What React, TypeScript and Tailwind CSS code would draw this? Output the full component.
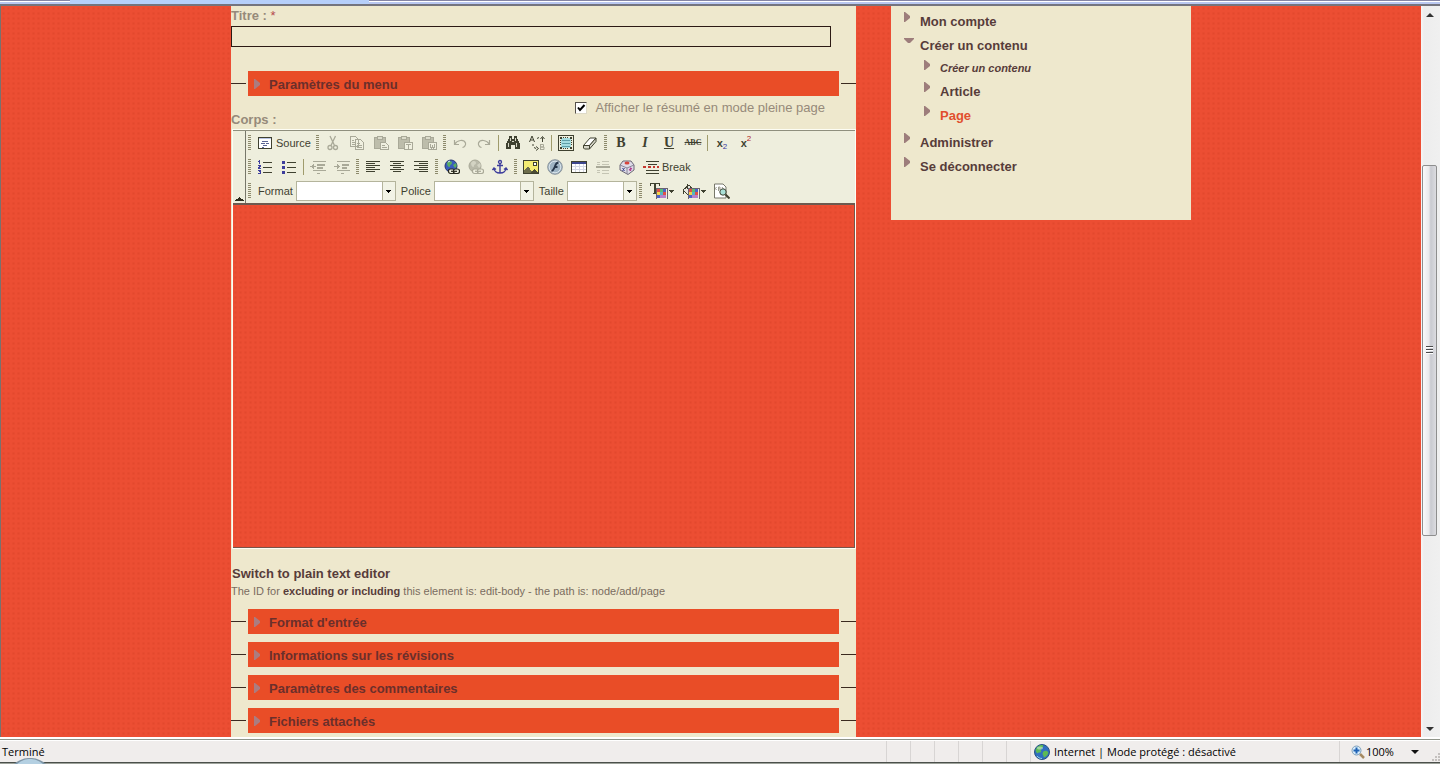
import type { ReactNode } from 'react';

const DOTS =
  'bg-[#ec4e33] bg-[radial-gradient(circle_at_center,#e3482d_0,#e74b30_1px,transparent_2px)] bg-[size:5px_5px]';

const INK = '#3f4130';
const OFF = '#a9a998';

function Svg({ children, w = 16, crisp = true }: { children: ReactNode; w?: number; crisp?: boolean }) {
  return (
    <svg
      width={w}
      height={16}
      viewBox={`0 0 ${w} 16`}
      fill="none"
      shapeRendering={crisp ? 'crispEdges' : 'auto'}
      aria-hidden="true"
      className="shrink-0"
    >
      {children}
    </svg>
  );
}

function Tool({ label, children }: { label: string; children: ReactNode }) {
  return (
    <button type="button" aria-label={label} className="flex h-6 w-6 shrink-0 items-center justify-center">
      {children}
    </button>
  );
}

function Handle() {
  return (
    <span className="flex h-6 w-[7px] shrink-0 items-center pl-0.5">
      <span className="h-4 w-[3px] bg-[repeating-linear-gradient(to_bottom,#8d8a6c_0,#8d8a6c_1px,transparent_1px,transparent_2px)]" />
    </span>
  );
}

function Separator() {
  return (
    <span className="flex h-6 w-[5px] shrink-0 items-center justify-center">
      <span className="h-4 w-px bg-[#9f9b6c]" />
    </span>
  );
}

function Combo({ id, label, width }: { id: string; label: string; width: string }) {
  return (
    <>
      <label htmlFor={id} className="pr-[3px] pl-[5px]">
        {label}
      </label>
      <span className={`relative flex h-5 shrink-0 ${width}`}>
        <select id={id} className="w-full appearance-none border border-[#b4b49c] bg-white px-1 outline-none" />
        <span className="pointer-events-none absolute inset-y-px right-px flex w-[13px] items-center justify-center border-l border-[#b4b49c] bg-[#f2f3e6]">
          <svg width="5" height="3" viewBox="0 0 5 3" shapeRendering="crispEdges" aria-hidden="true">
            <path d="M0 0h5v1H4v1H3v1H2V2H1V1H0z" fill="#000" />
          </svg>
        </span>
      </span>
    </>
  );
}

function Clipboard({ children }: { children: ReactNode }) {
  return (
    <Svg>
      <path d="M1.500 2.500h11v11h-11z" fill="#bdbdab" stroke={OFF} />
      <path d="M4.500 1.500h5v3h-5z" fill="#dcdccb" stroke={OFF} />
      <path d="M7 7h9v8H7z" fill="#f0f0e0" />
      {children}
    </Svg>
  );
}

function Swatches({ x }: { x: number }) {
  return (
    <>
      <path d={`M${x} 6h9v9h-9z`} fill="#77727c" />
      <path d={`M${x} 6h3v3h-3zM${x + 6} 9h3v3h-3z`} fill="#e05048" />
      <path d={`M${x + 3} 6h3v3h-3z`} fill="#5bbd74" />
      <path d={`M${x + 6} 6h3v3h-3zM${x} 12h3v3h-3z`} fill="#4e62c4" />
      <path d={`M${x} 9h3v3h-3z`} fill="#f3d34c" />
      <path d={`M${x + 3} 9h3v3h-3z`} fill="#55b5c5" />
      <path d={`M${x + 3} 12h6v3h-6z`} fill="#b77fc8" />
      <path d={`M${x - 1} 5h11v11h-11z`} transform="translate(.5 .5)" stroke="#6a6470" strokeWidth="1" />
      <path d={`M${x + 12} 7h5v1h-1v1h-1v1h-1v-1h-1v-1h-1z`} fill={INK} />
    </>
  );
}

function Chain({ color }: { color: string }) {
  return (
    <g fill="#f0f0e0" stroke={color} strokeWidth="1.200">
      <rect x="4.500" y="10" width="6" height="4.500" rx="2" />
      <rect x="9.500" y="10" width="6" height="4.500" rx="2" />
      <path d="M7 12.300h6" />
    </g>
  );
}

function FirstRow() {
  return (
    <div className="flex h-6 items-center">
      <Handle />
      <button type="button" className="flex h-6 w-[61px] shrink-0 items-center gap-[3px] pl-1">
        <Svg>
          <path d="M1.500 2.500h13v11h-13z" fill="#fff" stroke={INK} />
          <path d="M2 3h12v1H2z" fill="#b9c4e4" />
          <path d="M5 6h6M4 8h4M9 8h3M6 10h4M5 12h2" stroke="#5b6494" transform="translate(0 .5)" />
        </Svg>
        Source
      </button>
      <Handle />
      <Tool label="Couper">
        <Svg crisp={false}>
          <path d="M5 1l4.500 9.500M10.500 1L6 10.500" stroke={OFF} strokeWidth="1.300" />
          <circle cx="5" cy="12.500" r="2" stroke={OFF} strokeWidth="1.300" />
          <circle cx="10.500" cy="12.500" r="2" stroke={OFF} strokeWidth="1.300" />
        </Svg>
      </Tool>
      <Tool label="Copier">
        <Svg>
          <path d="M1.500 1.500h5l3 3v7h-8zM6.500 4.500h5l3 3v7h-8z" fill="#f0f0e0" stroke={OFF} />
          <path d="M3 5.500h2M3 7.500h3M3 9.500h3M8 8.500h3M8 10.500h5M8 12.500h5" stroke={OFF} />
        </Svg>
      </Tool>
      <Tool label="Coller">
        <Clipboard>
          <path d="M7.500 7.500h5l3 3v4h-8zM9 10.500h3M9 12.500h5" stroke={OFF} />
        </Clipboard>
      </Tool>
      <Tool label="Coller comme texte">
        <Clipboard>
          <path d="M7.500 7.500h8v7h-8z" stroke={OFF} />
          <path d="M9 9h5v1h-2v4h-1v-4H9z" fill={OFF} />
        </Clipboard>
      </Tool>
      <Tool label="Coller de Word">
        <Clipboard>
          <path d="M7.500 7.500h8v7h-8z" stroke={OFF} />
          <path d="M9.500 9v3l1 1.500 1-2 1 2 1-1.500V9" stroke={OFF} />
        </Clipboard>
      </Tool>
      <Handle />
      <Tool label="Annuler">
        <Svg crisp={false}>
          <path d="M2.500 5v4.500H7M3 9c2-4 9-5 10.500-1 .5 2-1 4-3 4.500" stroke={OFF} strokeWidth="1.200" />
        </Svg>
      </Tool>
      <Tool label="Refaire">
        <Svg crisp={false}>
          <path d="M13.500 5v4.500H9M13 9C11 5 4 4 2.500 8c-.5 2 1 4 3 4.500" stroke={OFF} strokeWidth="1.200" />
        </Svg>
      </Tool>
      <Separator />
      <Tool label="Chercher">
        <Svg>
          <path d="M4 1h3v3h2V1h3v3h1v2h1v2h1v6h-5v-4H6v4H1V8h1V6h1V4h1z" fill={INK} />
          <path d="M3 8h1v4H3zM11 8h1v4h-1zM5 3h1v3H5zM10 3h1v3h-1zM7 6h2v1H7z" fill="#d8d8c8" />
        </Svg>
      </Tool>
      <Tool label="Remplacer">
        <Svg crisp={false}>
          <path d="M.5 7L3 1l2.500 6M1.500 5h3" stroke={INK} />
          <path d="M11.500 9v6M11.500 9.500h3v2.500h-3M12 12h3v2.500h-3.500" stroke={OFF} />
          <path d="M8 3.500l2-1M13.500 7V2.500M11.500 4l2-2.500 2 2.500M4 9v2M5 12.500l2 1M7 11.500l2.500 2L7 15.500" stroke={INK} />
        </Svg>
      </Tool>
      <Separator />
      <Tool label="Tout sélectionner">
        <Svg>
          <path d="M.5.5h15v15H.5z" stroke={INK} />
          <path d="M2 2h2v2H2zM12 2h2v2h-2zM2 12h2v2H2zM12 12h2v2h-2z" fill={INK} />
          <path d="M4 3h8v1h1v8h-1v1H4v-1H3V4h1z" fill="#a5dde1" />
          <path d="M4 5.500h8M4 8.500h8M4 11.500h8" stroke="#5f9fa8" />
          <path d="M5 2.500h1M7 2.500h1M9 2.500h1M5 13.500h1M7 13.500h1M9 13.500h1M2.500 5v1M2.500 7v1M2.500 9v1M13.500 5v1M13.500 7v1M13.500 9v1" stroke={INK} />
        </Svg>
      </Tool>
      <Tool label="Supprimer le format">
        <Svg crisp={false}>
          <path d="M1.500 10.500L8 3h6l-6.500 7.500z" fill="#fff" stroke={INK} />
          <path d="M1.500 10.500h6V14h-5l-1-1zM7.500 10.500L14 3v3.500L7.500 14z" fill="#d5d5c8" stroke={INK} />
        </Svg>
      </Tool>
      <Handle />
      <Tool label="Gras">
        <span className="font-['Liberation_Serif',serif] text-[14px] leading-4 font-bold">B</span>
      </Tool>
      <Tool label="Italique">
        <span className="font-['Liberation_Serif',serif] text-[14px] leading-4 font-bold italic">I</span>
      </Tool>
      <Tool label="Souligné">
        <span className="font-['Liberation_Serif',serif] text-[14px] leading-4 font-bold underline">U</span>
      </Tool>
      <Tool label="Barré">
        <span className="font-['Liberation_Serif',serif] text-[8px] leading-4 font-bold line-through">ABC</span>
      </Tool>
      <Separator />
      <Tool label="Indice">
        <span className="flex items-center text-[11px] leading-4 font-bold">
          x<span className="pt-2 text-[8px] leading-2 font-normal text-[#3b3ba0]">2</span>
        </span>
      </Tool>
      <Tool label="Exposant">
        <span className="flex items-center text-[11px] leading-4 font-bold">
          x<span className="pb-2 text-[8px] leading-2 font-normal text-[#b02525]">2</span>
        </span>
      </Tool>
    </div>
  );
}

function Align({ short }: { short: string }) {
  return (
    <Svg>
      <path d="M1 2.500h14M1 6.500h14M1 10.500h14" stroke={INK} />
      <path d={short} stroke={INK} />
    </Svg>
  );
}

function SecondRow() {
  return (
    <div className="flex h-6 items-center">
      <Handle />
      <Tool label="Liste numérotée">
        <Svg>
          <path d="M6 3.500h9M6 8.500h9M6 13.500h9" stroke={INK} />
          <path d="M2.500 1v4M1 2.500h1M1 6.500h2v1H2v1H1v1h3M1 11.500h2v1H2M3 12.500v2M1 14.500h2" stroke="#3d3d9c" />
        </Svg>
      </Tool>
      <Tool label="Liste à puces">
        <Svg>
          <path d="M6 3.500h9M6 8.500h9M6 13.500h9" stroke={INK} />
          <path d="M1 2h3v3H1zM1 7h3v3H1zM1 12h3v3H1z" fill="#3d3d9c" />
        </Svg>
      </Tool>
      <Separator />
      <Tool label="Diminuer le retrait">
        <Svg>
          <path d="M3 2.500h13M7 5.500h8M7 8.500h6M3 11.500h13M7 14.500h3M0 7.500h6" stroke={OFF} />
          <path d="M3 5h1v5H3V9H2V6h1zM7 5h8v2H7zM7 8h6v2H7z" fill={OFF} />
        </Svg>
      </Tool>
      <Tool label="Augmenter le retrait">
        <Svg>
          <path d="M3 2.500h13M3 11.500h13M7 14.500h3M0 7.500h6" stroke={OFF} />
          <path d="M3 5h1v1h1v3H4v1H3zM8 5h7v2H8zM8 8h5v2H8z" fill={OFF} />
        </Svg>
      </Tool>
      <Handle />
      <Tool label="Aligner à gauche">
        <Align short="M1 4.500h9M1 8.500h9M1 12.500h9" />
      </Tool>
      <Tool label="Centrer">
        <Align short="M4 4.500h8M4 8.500h8M4 12.500h8" />
      </Tool>
      <Tool label="Aligner à droite">
        <Align short="M6 4.500h9M6 8.500h9M6 12.500h9" />
      </Tool>
      <Handle />
      <Tool label="Lien">
        <Svg crisp={false}>
          <circle cx="7" cy="7" r="6" fill="#3a5cbd" stroke="#25356f" />
          <path d="M3 4c2-3 5-2 5 0s-2 1-2 3-3 1-3-3zM9 6l3-2c1 2 1 4-1 5z" fill="#5aae62" />
          <path d="M4 3l2-1" stroke="#d5e6ff" />
          <Chain color="#26261c" />
        </Svg>
      </Tool>
      <Tool label="Supprimer le lien">
        <Svg crisp={false}>
          <circle cx="7" cy="7" r="6" fill="#b9b9a9" stroke={OFF} />
          <path d="M3 4c2-3 5-2 5 0s-2 1-2 3-3 1-3-3zM9 6l3-2c1 2 1 4-1 5z" fill="#d3d3c3" />
          <Chain color={OFF} />
        </Svg>
      </Tool>
      <Tool label="Ancre">
        <Svg crisp={false}>
          <circle cx="8" cy="3" r="1.500" stroke="#3d3d9c" strokeWidth="1.300" />
          <path
            d="M8 4.500V14M5 6.500h6M2 9c0 3 2.500 5 6 5s6-2 6-5M.5 11L2 9l2 1.500M15.500 11L14 9l-2 1.500"
            stroke="#3d3d9c"
            strokeWidth="1.400"
          />
        </Svg>
      </Tool>
      <Handle />
      <Tool label="Image">
        <Svg>
          <path d="M.5 1.500h15v13H.5z" fill="#f4ec72" stroke={INK} />
          <path d="M10 3h4v4h-4z" fill={INK} />
          <path d="M11 4h2v2h-2z" fill="#fff" />
          <path d="M1 12l4-5 5 7H1z" fill="#6d6d4c" />
          <path d="M8 14l3-4 4 4z" fill="#4c4c36" />
        </Svg>
      </Tool>
      <Tool label="Animation Flash">
        <Svg crisp={false}>
          <circle cx="8" cy="8" r="7.300" fill="#9fb4c4" stroke="#8c959c" />
          <circle cx="8" cy="8" r="5.800" stroke="#dbe5ea" />
          <path d="M11.500 3.500c-3 0-3 3-4 5s-1.500 3.500-3 3.500M7 8h3.500" stroke="#26364a" strokeWidth="1.800" />
        </Svg>
      </Tool>
      <Tool label="Tableau">
        <Svg>
          <path d="M.5 2.500h15v11H.5z" fill="#fff" stroke={INK} />
          <path d="M4.500 5v8M8.500 5v8M12.500 5v8M1 7.500h14M1 10.500h14" stroke="#d5d8e4" />
          <path d="M1 3h14v2H1z" fill="#3d478e" />
        </Svg>
      </Tool>
      <Tool label="Ligne horizontale">
        <Svg>
          <path d="M1 8h14" stroke={OFF} strokeWidth="2" />
          <path d="M2 3.500h3M2 5.500h3M7 2.500h7M7 5.500h7M2 11.500h3M2 13.500h3M7 11.500h7M7 14.500h7" stroke="#c5c5b4" />
        </Svg>
      </Tool>
      <Tool label="Caractère spécial">
        <Svg crisp={false}>
          <path d="M1 6l3-4h8l3 4v5l-6 4.500L1 11z" fill="#dedbe8" stroke="#6a6674" />
          <path d="M1 6l7 3 7-3M8 9v6" stroke="#8a8698" />
          <ellipse cx="8" cy="4" rx="2.500" ry="1.500" fill="#d7443c" />
          <path d="M3.500 9l2 3M5.500 9l-2 3" stroke="#3d478e" />
          <path d="M10 11l3-1.500M11.500 8.500v3.500" stroke="#b13a8c" strokeWidth="1.300" />
        </Svg>
      </Tool>
      <button type="button" className="flex h-6 shrink-0 items-center gap-[3px] pl-1">
        <Svg>
          <path d="M3 2.500h13M5 5.500h9M3 11.500h13M3 14.500h13" stroke={INK} />
          <path d="M0 8h3M5 8h3M10 8h2M14 8h2" stroke="#c4392f" strokeWidth="2" />
        </Svg>
        Break
      </button>
    </div>
  );
}

function ThirdRow() {
  return (
    <div className="flex h-6 items-center">
      <Handle />
      <Combo id="format" label="Format" width="w-[100px]" />
      <Combo id="police" label="Police" width="w-[100px]" />
      <Combo id="taille" label="Taille" width="w-[70px]" />
      <Handle />
      <button type="button" aria-label="Couleur de texte" className="ml-1.5 flex h-6 w-8 shrink-0 items-center">
        <Svg w={26}>
          <path d="M0 0h10v3H9V1H6v9h1v1H3v-1h1V1H1v2H0z" fill={INK} />
          <Swatches x={7} />
        </Svg>
      </button>
      <button type="button" aria-label="Couleur de fond" className="flex h-6 w-8 shrink-0 items-center">
        <Svg w={26}>
          <path d="M1 7l6-5 5 6-5 5z" fill="#e6e6dc" stroke={INK} />
          <path d="M5 1v5M1 7v4" stroke={INK} />
          <Swatches x={7} />
        </Svg>
      </button>
      <button type="button" aria-label="Prévisualisation" className="flex h-6 w-5 shrink-0 items-center">
        <Svg crisp={false}>
          <path d="M.5 1h8.500l3 3v11H.5z" fill="#fff" stroke="#77776a" />
          <path d="M2.500 4l-1 1.500 1 1.500M4.500 8V4h1.500v2H5M8 4l1 1.500L8 7" stroke="#9a9a8c" />
          <circle cx="9" cy="9" r="3.200" fill="#a8dfd6" stroke={INK} />
          <path d="M11.500 11.500l4 4" stroke={INK} strokeWidth="2" />
        </Svg>
      </button>
    </div>
  );
}

function Fieldset({ title }: { title: string }) {
  return (
    <section className="flex h-[25px] items-center gap-0.5">
      <span className="h-px w-[15px] bg-[#3b2a20]" />
      <button
        type="button"
        className="flex h-full flex-1 items-center gap-[9px] bg-[#e94d27] pl-1.5 text-left font-bold text-[#6b2f2b]"
      >
        <svg width="6" height="10" viewBox="0 0 6 10" aria-hidden="true">
          <path d="M0 0h1l5 4v2l-5 4H0z" fill="#ab7c80" />
        </svg>
        <span className="pt-0.5">{title}</span>
      </button>
      <span className="h-px w-[15px] bg-[#3b2a20]" />
    </section>
  );
}

function MenuItem({ title, open, style = 'h-6 leading-6' }: { title: string; open?: boolean; style?: string }) {
  return (
    <a href="#" className={`flex gap-2.5 font-bold ${style}`}>
      <span className="flex w-1.5 pt-0.5">
        {open ? (
          <svg width="10" height="6" viewBox="0 0 10 6" aria-hidden="true" className="mt-0.5 shrink-0">
            <path d="M0 0h10v1L6 5H4L0 1z" fill="#9d7d7b" />
          </svg>
        ) : (
          <svg width="6" height="10" viewBox="0 0 6 10" aria-hidden="true" className="shrink-0">
            <path d="M0 0h1l5 4v2l-5 4H0z" fill="#9d7d7b" />
          </svg>
        )}
      </span>
      {title}
    </a>
  );
}

function Sidebar() {
  return (
    <nav className="h-[214px] w-[300px] shrink-0 bg-[#eee8cd] pt-1 pl-[13px] text-[#573c3a]">
      <MenuItem title="Mon compte" />
      <MenuItem title="Créer un contenu" open />
      <div className="mb-[3px] pl-5">
        <MenuItem title="Créer un contenu" style="h-[22px] text-[11px] leading-5 italic" />
        <MenuItem title="Article" />
        <MenuItem title="Page" style="h-6 leading-6 text-[#e14f2e]" />
      </div>
      <MenuItem title="Administrer" />
      <MenuItem title="Se déconnecter" />
    </nav>
  );
}

function Editor() {
  return (
    <div className="mt-[3px] ml-px border border-[#fdfdf4]">
      <div className="flex border-t border-b-2 border-t-[#8f8f7e] border-b-[#6d5a50] bg-[#eeeedd] text-[11px] text-[#3f4130]">
        <button
          type="button"
          aria-label="Réduire la barre d'outils"
          className="flex w-[13px] items-end justify-center border-r border-[#77776a] pb-0.5"
        >
          <svg width="9" height="4" viewBox="0 0 9 4" shapeRendering="crispEdges" aria-hidden="true">
            <path d="M4 0h1v1h1v1h2v1h1v1H0V3h1V2h2V1h1z" fill="#2d2d1e" />
          </svg>
        </button>
        <div className="flex-1">
          <FirstRow />
          <SecondRow />
          <ThirdRow />
        </div>
      </div>
      <textarea
        id="corps"
        className={`block h-[343px] w-full resize-none border-r border-b border-[#77554a] outline-none ${DOTS}`}
      />
    </div>
  );
}

function ScrollBar() {
  return (
    <div className="flex w-[19px] shrink-0 flex-col items-center bg-[linear-gradient(to_right,#f8f6f6,#ededed_3px,#f0f0f0)] pr-0.5">
      <button type="button" aria-label="Défiler vers le haut" className="flex h-[17px] items-center">
        <svg width="8" height="4" viewBox="0 0 8 4" aria-hidden="true">
          <path d="M4 0l4 4H0z" fill="#333" />
        </svg>
      </button>
      <div className="flex w-full flex-1 flex-col">
        <div className="flex-[142]" />
        <div className="mx-px flex flex-[370] flex-col items-center justify-center gap-px rounded-xs border border-[#8e8e8e] bg-[linear-gradient(to_right,#fafafa,#e9e9eb_45%,#c9cad0_60%,#dcdce0)]">
          <span className="h-0.5 w-[7px] border-t border-[#4a4a4a] bg-white" />
          <span className="h-0.5 w-[7px] border-t border-[#4a4a4a] bg-white" />
          <span className="h-0.5 w-[7px] border-t border-[#4a4a4a] bg-white" />
        </div>
        <div className="flex-[185]" />
      </div>
      <button type="button" aria-label="Défiler vers le bas" className="flex h-[17px] items-center">
        <svg width="8" height="4" viewBox="0 0 8 4" aria-hidden="true">
          <path d="M0 0h8L4 4z" fill="#333" />
        </svg>
      </button>
    </div>
  );
}

function StatusBar() {
  return (
    <footer className="relative flex h-[27px] shrink-0 flex-col overflow-hidden bg-white pt-0.5 font-['Open_Sans',sans-serif] text-[11px] text-black">
      <div className="h-px shrink-0 bg-[#8f9489]" />
      <div className="mt-px flex flex-1 items-stretch bg-[#f0edec]">
        <span className="flex flex-1 items-center pl-0.5">Terminé</span>
        <span className="w-6 border-l border-[#d8d5d4]" />
        <span className="w-6 border-l border-[#d8d5d4]" />
        <span className="w-6 border-l border-[#d8d5d4]" />
        <span className="w-6 border-l border-[#d8d5d4]" />
        <span className="w-6 border-l border-[#d8d5d4]" />
        <span className="w-6 border-l border-[#d8d5d4]" />
        <span className="flex w-[309px] items-center gap-1 border-l border-[#d8d5d4] pl-[3px]">
          <svg width="16" height="16" viewBox="0 0 16 16" aria-hidden="true">
            <circle cx="8" cy="8" r="7.500" fill="#2f6fc0" stroke="#2b5482" />
            <path
              d="M2 5c2-4 6-4.500 7-3.500S8 4 7 5s1 2 0 3-2 0-3 1-3-2-2-4zM9 8c2-2 4-1 5 0s-1 4-3 5-1-1-2-2 0-2 0-3z"
              fill="#5dbb55"
            />
            <path d="M3 12c1 1.500 3 2.500 5 2.500" stroke="#8fd0f0" fill="none" />
            <ellipse cx="6" cy="4" rx="3" ry="1.500" fill="#fff" opacity=".4" />
          </svg>
          Internet | Mode protégé : désactivé
        </span>
        <button type="button" className="flex w-[101px] items-center gap-px border-l border-[#d8d5d4] pl-[11px]">
          <svg width="14" height="14" viewBox="0 0 14 14" fill="none" aria-hidden="true">
            <path d="M9 9l4 4" stroke="#a58a62" strokeWidth="2.500" />
            <circle cx="5.500" cy="5.500" r="4.500" fill="#d8ecfb" stroke="#7f9fb9" />
            <path d="M5.500 2.500v6M2.500 5.500h6" stroke="#1f62b5" strokeWidth="2" />
          </svg>
          100%
          <svg width="8" height="4" viewBox="0 0 8 4" aria-hidden="true" className="ml-4">
            <path d="M0 0h8L4 4z" fill="#111" />
          </svg>
          <svg width="8" height="8" viewBox="0 0 8 8" aria-hidden="true" className="mb-px ml-3 self-end">
            <path d="M6 0h2v2H6zM3 3h2v2H3zM6 3h2v2H6zM0 6h2v2H0zM3 6h2v2H3zM6 6h2v2H6z" fill="#c4c0be" />
          </svg>
        </button>
      </div>
      <div className="h-0.5 shrink-0 border-t border-[#4b504b] bg-[#9ea39b]" />
      <svg width="32" height="6" viewBox="0 0 32 6" aria-hidden="true" className="absolute bottom-0 left-3.5">
        <path d="M0 6C6 1 11 0 16 0s10 1 16 6z" fill="#8097a8" />
        <path d="M3 6c5-4 9-5 13-5s8 1 13 5z" fill="#b4d0e2" />
      </svg>
    </footer>
  );
}

export default function App() {
  return (
    <div className="flex h-screen flex-col overflow-hidden font-['Liberation_Sans',Arial,sans-serif] text-[13px] leading-4">
      <header className="flex h-1.5 shrink-0 border-b-2 border-[#74747e] bg-[#b9c7f0]">
        <span className="h-0.5 w-[70px] border-t border-[#8585a5] bg-white" />
        <span className="h-full w-[299px] bg-[#b6cffa]" />
        <span className="h-0.5 flex-1 border-t border-[#8585a5] bg-white" />
      </header>
      <div className="flex min-h-0 flex-1 overflow-hidden">
        <main className={`flex-1 overflow-hidden border-l border-[#77716e] ${DOTS}`}>
          <div className="mx-auto flex h-full max-w-[960px] items-start justify-between">
            <form className="min-h-full w-[625px] shrink-0 bg-[#eee8cd] text-[#968a7a]">
              <label htmlFor="titre" className="block h-5 leading-5 font-bold">
                Titre : <span className="font-normal text-[#b5484d]">*</span>
              </label>
              <input
                id="titre"
                type="text"
                className="mb-6 block h-[21px] w-[600px] border border-[#2c1a14] bg-transparent px-1 outline-none"
              />
              <Fieldset title="Paramètres du menu" />
              <div className="mt-1.5 flex h-3 items-center justify-end gap-2 pr-[31px] leading-3">
                <span className="relative flex">
                  <input
                    id="resume"
                    type="checkbox"
                    defaultChecked
                    className="peer h-3 w-3 appearance-none border border-[#55504a] border-r-[#dedac8] border-b-[#dedac8] bg-white"
                  />
                  <svg
                    width="12"
                    height="12"
                    viewBox="0 0 12 12"
                    aria-hidden="true"
                    className="pointer-events-none invisible absolute inset-0 peer-checked:visible"
                  >
                    <path d="M3 5.500l2 2.500 4.500-5" fill="none" stroke="#000" strokeWidth="2" />
                  </svg>
                </span>
                <label htmlFor="resume">Afficher le résumé en mode pleine page</label>
              </div>
              <label htmlFor="corps" className="block h-3 leading-3 font-bold">
                Corps :
              </label>
              <Editor />
              <a href="#" className="mt-4 ml-px block leading-[18px] font-bold text-[#573c3a]">
                Switch to plain text editor
              </a>
              <p className="mb-[9px] text-[11px] leading-[17px] text-[#7a6c60]">
                The ID for <strong className="text-[#573c3a]">excluding or including</strong> this element is: edit-body -
                the path is: node/add/page
              </p>
              <div className="flex flex-col gap-2">
                <Fieldset title="Format d'entrée" />
                <Fieldset title="Informations sur les révisions" />
                <Fieldset title="Paramètres des commentaires" />
                <Fieldset title="Fichiers attachés" />
              </div>
            </form>
            <Sidebar />
          </div>
        </main>
        <ScrollBar />
      </div>
      <StatusBar />
    </div>
  );
}
